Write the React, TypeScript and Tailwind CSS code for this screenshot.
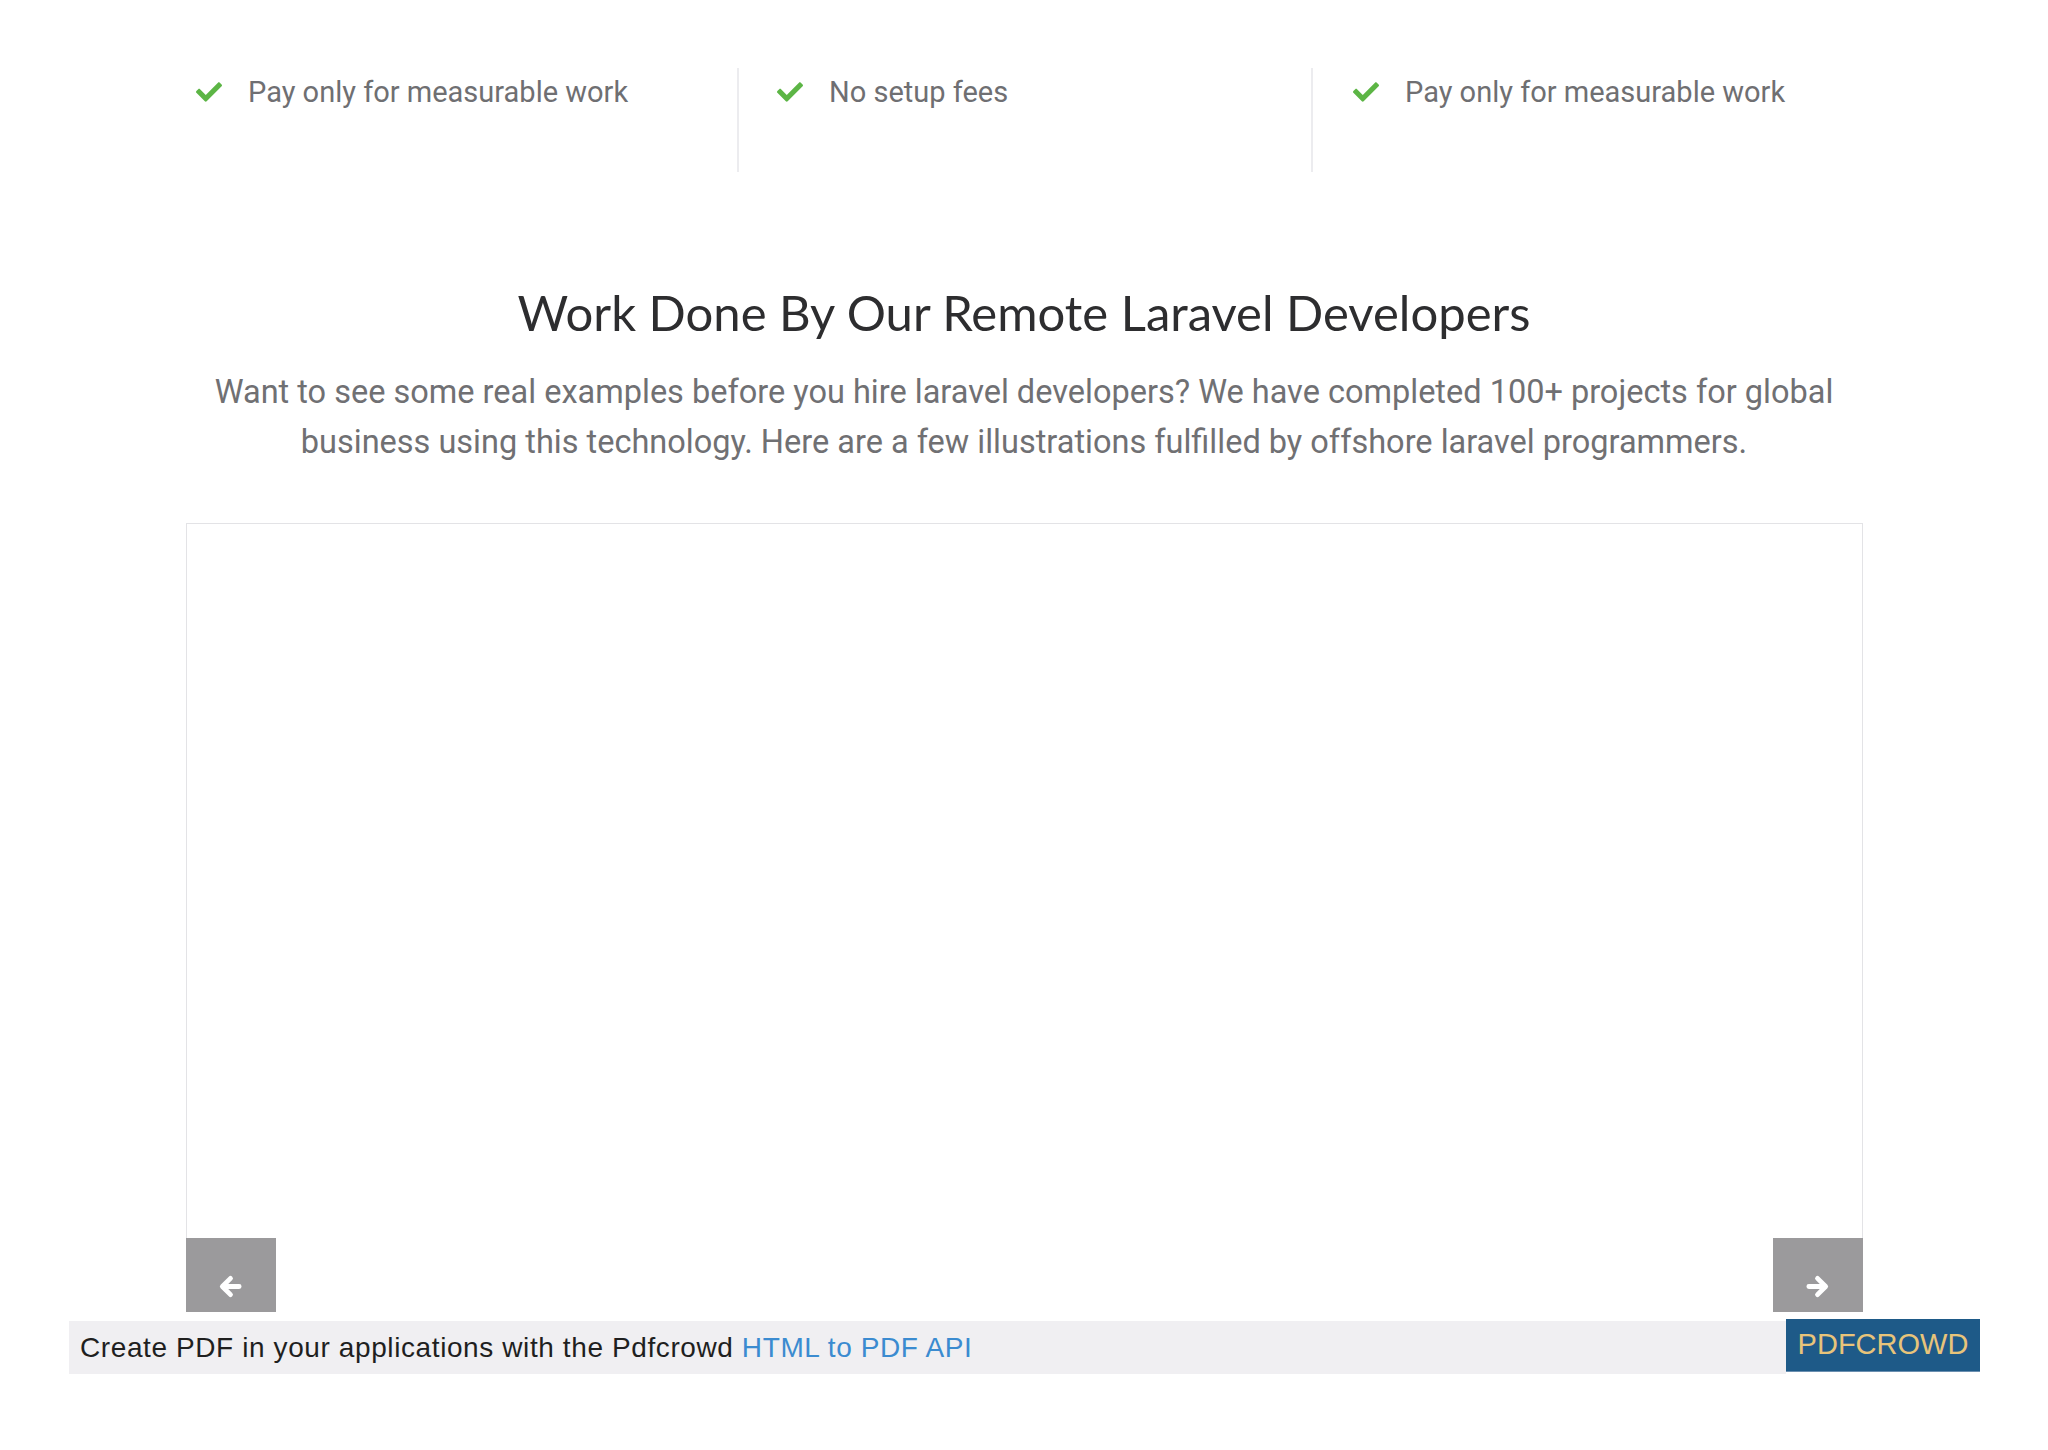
import { FaCheck } from "react-icons/fa";

const features = [
  { text: "Pay only for measurable work", pad: "pl-[33px]" },
  { text: "No setup fees", pad: "pl-[38px] border-l-2 border-[#ececef]" },
  { text: "Pay only for measurable work", pad: "pl-[40px] border-l-2 border-[#ececef]" },
];

function Feature({ text, pad }: { text: string; pad: string }) {
  return (
    <div className={`h-[104px] pt-[4px] ${pad}`}>
      <div className="flex h-[40px] items-center gap-[26px]">
        <FaCheck className="h-[26px] w-[26px] shrink-0 text-[#5cb545]" />
        <span className="text-[29px] leading-[40px] text-[#6f6f72]">{text}</span>
      </div>
    </div>
  );
}

// chunky rounded arrow like the carousel nav glyph
function Arrow({ flip }: { flip?: boolean }) {
  return (
    <svg
      viewBox="0 0 26 26"
      className={`h-[25px] w-[25px] ${flip ? "-scale-x-100" : ""}`}
      fill="none"
      stroke="currentColor"
      strokeWidth={5}
      strokeLinecap="round"
      strokeLinejoin="round"
    >
      <path d="M22 13H5M13 4.5L4.5 13L13 21.5" />
    </svg>
  );
}

function NavButton({ side }: { side: "left" | "right" }) {
  const pos = side === "left" ? "left-[-1px]" : "right-[-1px]";
  return (
    <button
      type="button"
      className={`absolute bottom-[-1px] ${pos} flex h-[74px] w-[90px] items-end justify-center bg-[#9b9a9c] pb-[13px] text-white`}
    >
      <Arrow flip={side === "right"} />
    </button>
  );
}

export default function App() {
  return (
    <div className="min-h-[1450px] bg-white font-['Roboto',sans-serif]">
      {/* features strip */}
      <div className="mx-auto grid w-[1722px] grid-cols-3 pt-[68px]">
        {features.map((f, i) => (
          <Feature key={i} text={f.text} pad={f.pad} />
        ))}
      </div>

      {/* work section */}
      <section className="pt-[110px] text-center">
        <h2 className="font-['Lato',sans-serif] text-[49px] leading-[60px] text-[#2d2d2f]">
          Work Done By Our Remote Laravel Developers
        </h2>
        <p className="mx-auto mt-[25px] w-[1640px] text-[32.5px] leading-[50px] text-[#707073]">
          Want to see some real examples before you hire laravel developers? We have completed
          100+ projects for global business using this technology. Here are a few illustrations
          fulfilled by offshore laravel programmers.
        </p>
        <div className="relative mx-auto mt-[56px] h-[788px] w-[1677px] border border-b-0 border-[#e3e3e6] bg-white">
          <NavButton side="left" />
          <NavButton side="right" />
        </div>
      </section>

      {/* pdfcrowd footer */}
      <div className="ml-[69px] mt-[10px] flex w-[1911px] font-['Liberation_Sans',Arial,sans-serif]">
        <div className="flex h-[53px] flex-1 items-center bg-[#f0eff2] pl-[11px] text-[28px] tracking-[0.6px] text-[#1f1f1f]">
          Create PDF in your applications with the Pdfcrowd&nbsp;
          <a href="#" className="text-[#3b8bd0]">
            HTML to PDF API
          </a>
        </div>
        <div className="-mt-[2px] flex h-[53px] w-[194px] items-center justify-center border-b border-[#6a8fb0] bg-[#1e5a88] text-[29px] text-[#e8c47a]">
          PDFCROWD
        </div>
      </div>
    </div>
  );
}
